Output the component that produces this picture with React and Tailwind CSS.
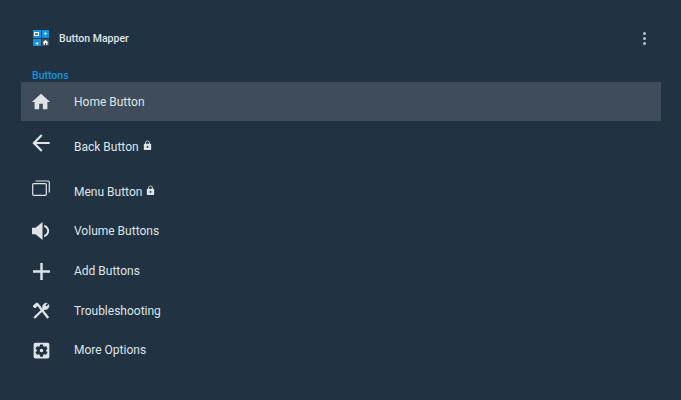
import { MdArrowBack, MdHome, MdSettingsApplications, MdAdd } from "react-icons/md";

const VolumeIcon = ({ className }) => (
  <svg viewBox="0 0 18 18" fill="currentColor" className={className}>
    <path d="M0 5.800v6.400h3.600L10.500 18V0L3.600 5.800H0z" />
    <path d="M12.200 2.800v2.300c1.800.8 3 2.200 3 3.900s-1.200 3.100-3 3.900v2.300c2.900-.9 5-3.300 5-6.200s-2.100-5.300-5-6.200z" />
  </svg>
);

const RecentsIcon = ({ className }) => (
  <svg viewBox="0 0 18 16" fill="none" stroke="currentColor" strokeWidth="1.2" className={className}>
    <rect x="0.7" y="3.700" width="13.600" height="11.600" rx="1" />
    <path d="M3.500 1h12.800a1 1 0 0 1 1 1v10.500" />
  </svg>
);

const ToolsIcon = ({ className }) => (
  <svg viewBox="0 0 18 18" fill="none" stroke="currentColor" className={className}>
    <path d="M5 1.500 16.200 16" strokeWidth="2.300" />
    <path d="M1 4.200 4.600 1l2 1.600L3 6z" fill="currentColor" strokeWidth="1" />
    <path d="M13.200 5.200 2.200 16" strokeWidth="2.300" />
    <path d="M16.800 2.200 14.500 4.400 13.300 3.300 15.400 1.100A4 4 0 0 0 10.500 6L12.500 7.800A4 4 0 0 0 16.800 2.200z" fill="currentColor" strokeWidth="0.300" />
  </svg>
);

const PinIcon = ({ className }) => (
  <svg viewBox="0 0 24 24" fill="currentColor" className={className}>
    <path d="M18 8h-1V6c0-2.760-2.240-5-5-5S7 3.240 7 6v2H6c-1.100 0-2 .9-2 2v10c0 1.100.9 2 2 2h12c1.100 0 2-.9 2-2V10c0-1.100-.9-2-2-2zm-6 9c-1.100 0-2-.9-2-2s.9-2 2-2 2 .9 2 2-.9 2-2 2zm3.100-9H8.900V6c0-1.710 1.390-3.100 3.100-3.100 1.710 0 3.100 1.390 3.100 3.100v2z" />
  </svg>
);

const AppLogo = () => (
  <div className="grid grid-cols-2 gap-px w-[16px] h-[16px]">
    <div className="bg-[#1192dc] flex items-center justify-center">
      <div className="w-[5px] h-[4px] border border-white" />
    </div>
    <div className="bg-[#1192dc] flex items-center justify-center text-white text-[7px] leading-none">+</div>
    <div className="bg-[#1192dc] flex items-center justify-center text-white text-[6px] leading-none">◂</div>
    <div className="bg-[#44505c] flex items-center justify-center">
      <MdHome className="w-[7px] h-[7px] text-white" />
    </div>
  </div>
);

const items = [
  { label: "Home Button", icon: <MdHome className="w-[22px] h-[22px]" />, rowClass: "h-[39px] bg-[#3f4d5b]", textClass: "pt-px" },
  { label: "Back Button", icon: <MdArrowBack className="w-[26px] h-[26px]" />, rowClass: "h-[50px]", textClass: "pt-px", locked: true, iconClass: "mb-[6px]" },
  { label: "Menu Button", icon: <RecentsIcon className="w-[18px] h-[16px]" />, rowClass: "h-[40px]", textClass: "pt-px", locked: true, iconClass: "mb-[6px]" },
  { label: "Volume Buttons", icon: <VolumeIcon className="w-[18px] h-[18px]" />, rowClass: "h-[40px]" },
  { label: "Add Buttons", icon: <MdAdd className="w-[29px] h-[29px]" />, rowClass: "h-[40px]" },
  { label: "Troubleshooting", icon: <ToolsIcon className="w-[18px] h-[18px]" />, rowClass: "h-[39px]", textClass: "pt-px" },
  { label: "More Options", icon: <MdSettingsApplications className="w-[21px] h-[21px]" />, rowClass: "h-[40px]" },
];

export default function App() {
  return (
    <div className="w-[681px] h-[400px] overflow-hidden bg-[#213343] font-['Roboto',sans-serif]">
      <header className="h-[68px] pl-[33px] pr-[35px] pt-[30px] flex items-start justify-between">
        <div className="flex items-center gap-[10px]">
          <AppLogo />
          <span className="text-[10.5px] font-medium text-[#dfe3e6] pt-px">Button Mapper</span>
        </div>
        <div className="flex flex-col gap-[2px] pt-[2px]">
          <span className="w-[3px] h-[3px] rounded-full bg-[#b9c1c8]" />
          <span className="w-[3px] h-[3px] rounded-full bg-[#b9c1c8]" />
          <span className="w-[3px] h-[3px] rounded-full bg-[#b9c1c8]" />
        </div>
      </header>
      <div className="h-[14px] pl-[32px] pt-px text-[10.5px] leading-[14px] font-medium text-[#0f96e0]">Buttons</div>
      <ul className="mx-[21px] w-[640px]">
        {items.map((item) => (
          <li key={item.label} className={`flex items-center text-[#dfe3e6] ${item.rowClass}`}>
            <div className={`w-[40px] flex justify-center ${item.iconClass || ""}`}>{item.icon}</div>
            <span className={`ml-[13px] text-[12px] ${item.textClass || ""}`}>{item.label}</span>
            {item.locked && <PinIcon className="ml-[3px] mb-[2px] w-[11px] h-[11px]" />}
          </li>
        ))}
      </ul>
    </div>
  );
}
